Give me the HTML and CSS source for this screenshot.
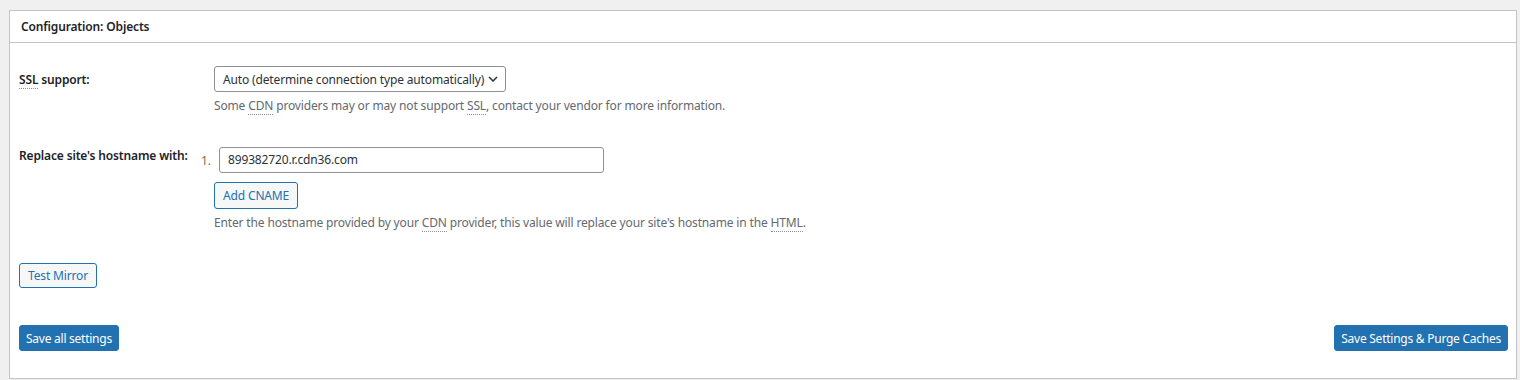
FILE: index.html
```html
<!DOCTYPE html>
<html lang="en">
<head>
    <meta charset="UTF-8">
    <title>Configuration: Objects</title>
    <link rel="stylesheet" href="styles.css">
</head>
<body>
    <!-- Postbox -->
    <div class="postbox">
        <h3 class="postbox-title">Configuration: Objects</h3>
        <div class="inside">
            <div class="form-row row-ssl">
                <div class="row-label"><abbr title="Secure Sockets Layer">SSL</abbr> support:</div>
                <div class="row-field">
                    <div class="select">
                        <span>Auto (determine connection type automatically)</span>
                        <svg class="chevron" width="10" height="6" viewBox="0 0 10 6"><path d="M1 1l4 4 4-4" fill="none" stroke="#2c3338" stroke-width="1.5"/></svg>
                    </div>
                    <p class="description">Some <abbr>CDN</abbr> providers may or may not support <abbr>SSL</abbr>, contact your vendor for more information.</p>
                </div>
            </div>

            <div class="form-row row-host">
                <div class="row-label">Replace site's hostname with:</div>
                <div class="row-field">
                    <div class="cname-item">
                        <span class="cname-num">1.</span>
                        <div class="text-input">899382720.r.cdn36.com</div>
                    </div>
                    <button class="button">Add CNAME</button>
                    <p class="description">Enter the hostname provided by your <abbr>CDN</abbr> provider, this value will replace your site's hostname in the <abbr>HTML</abbr>.</p>
                </div>
            </div>

            <div class="test-row">
                <button class="button">Test Mirror</button>
            </div>

            <div class="submit-row">
                <button class="button button-primary">Save all settings</button>
                <button class="button button-primary">Save Settings &amp; Purge Caches</button>
            </div>
        </div>
    </div>
</body>
</html>
```

FILE: styles.css
```css
* {
    box-sizing: border-box;
    margin: 0;
    padding: 0;
}
body {
    font-family: 'Noto Sans', 'Open Sans', sans-serif;
    background: #f0f0f1;
    color: #1d2327;
    font-size: 12px;
    line-height: 17px;
    letter-spacing: -0.15px;
    overflow: hidden;
}

/* Postbox */
.postbox {
    margin: 10px 3px 0 9px;
    background: #fff;
    border: 1px solid #c3c4c7;
    height: 369px;
}
.postbox-title {
    font-size: 12px;
    font-weight: 600;
    padding: 7px 11px;
    height: 32px;
    border-bottom: 1px solid #c3c4c7;
    color: #1d2327;
}
.inside {
    padding: 0 8px 0 9px;
}

/* Rows */
.form-row {
    display: grid;
    grid-template-columns: 195px 1fr;
}
.row-ssl {
    padding-top: 23px;
}
.row-host {
    padding-top: 33px;
}
.row-label {
    font-weight: 600;
    color: #1d2327;
}
.row-ssl .row-label {
    padding-top: 5px;
}
abbr {
    text-decoration: none;
    border-bottom: 1px dotted #8c8f94;
}
.description {
    color: #646970;
    margin-top: 5px;
}

/* Select */
.select {
    display: flex;
    align-items: center;
    justify-content: space-between;
    height: 26px;
    width: 292px;
    padding: 0 7px 0 8px;
    border: 1px solid #8c8f94;
    border-radius: 3px;
    color: #2c3338;
    white-space: nowrap;
}

/* CNAME input */
.cname-item {
    display: flex;
    align-items: center;
    margin-left: -13px;
}
.cname-num {
    color: #8a6a48;
    width: 18px;
}
.text-input {
    width: 385px;
    height: 26px;
    border: 1px solid #8c8f94;
    border-radius: 3px;
    padding: 3px 8px;
    color: #2c3338;
}

/* Buttons */
.button {
    font-family: inherit;
    font-size: 12px;
    letter-spacing: -0.15px;
    height: 27px;
    padding: 0 8px;
    border: 1px solid #2271b1;
    border-radius: 3px;
    background: #f6f7f7;
    color: #2271b1;
    cursor: pointer;
}
.row-host .button {
    margin-top: 9px;
}
.test-row {
    padding-top: 32px;
}
.test-row .button {
    height: 25px;
}
.button-primary {
    background: #2271b1;
    color: #fff;
    height: 26px;
    padding: 0 6px;
    letter-spacing: -0.25px;
}
.submit-row {
    display: flex;
    justify-content: space-between;
    padding-top: 37px;
}
```
